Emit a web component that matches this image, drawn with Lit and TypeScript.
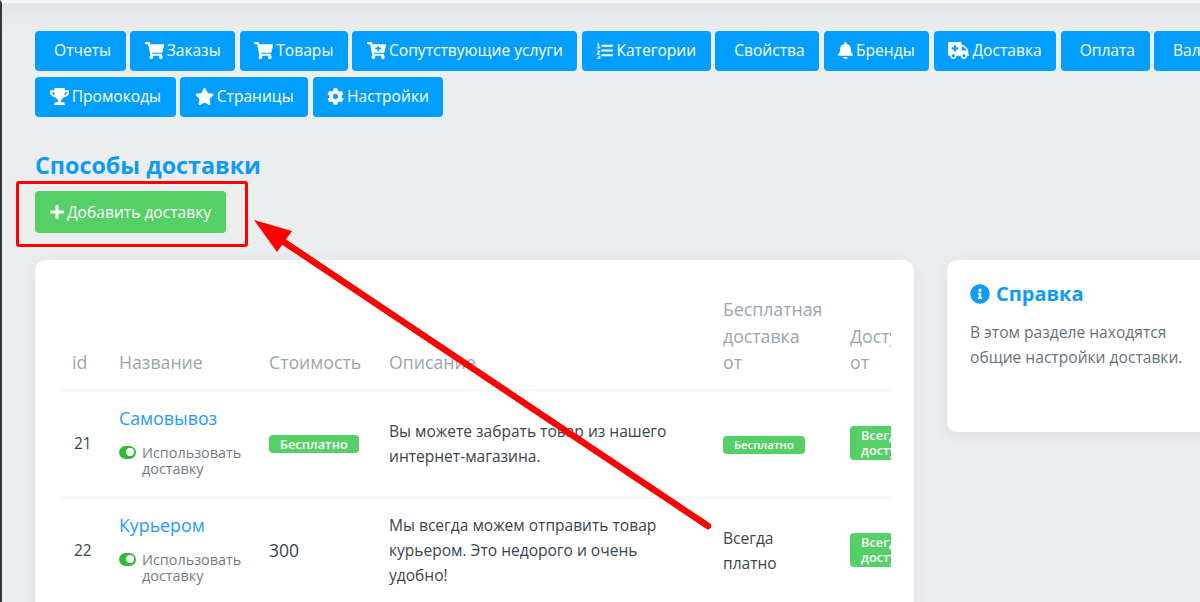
import { LitElement, html, css, svg } from "lit";
import { customElement } from "lit/decorators.js";

const P = {
  cart: [576, "M528.12 301.319l47.273-208C578.806 78.301 567.391 64 551.99 64H159.208l-9.166-44.81C147.758 8.021 137.93 0 126.529 0H24C10.745 0 0 10.745 0 24v16c0 13.255 10.745 24 24 24h69.883l70.248 343.435C147.325 417.1 136 435.222 136 456c0 30.928 25.072 56 56 56s56-25.072 56-56c0-15.674-6.447-29.835-16.824-40h209.647C430.447 426.165 424 440.326 424 456c0 30.928 25.072 56 56 56s56-25.072 56-56c0-22.172-12.888-41.332-31.579-50.405l5.517-24.276c3.413-15.018-8.002-29.319-23.403-29.319H218.117l-6.545-32h293.145c11.206 0 20.92-7.754 23.403-18.681z"],
  cartPlus: [576, "M504.717 320H211.572l6.545 32h268.418c15.401 0 26.816 14.301 23.403 29.319l-5.517 24.276C523.112 414.668 536 433.828 536 456c0 31.202-25.519 56.444-56.824 55.994-29.823-.429-54.35-24.631-55.155-54.447-.44-16.287 6.085-31.049 16.803-41.548H231.176C241.553 426.165 248 440.326 248 456c0 31.813-26.528 57.431-58.67 55.938-28.54-1.325-51.751-24.385-53.251-52.917-1.158-22.034 10.436-41.455 28.051-51.586L93.883 64H24C10.745 64 0 53.255 0 40V24C0 10.745 10.745 0 24 0h102.529c11.401 0 21.228 8.021 23.513 19.19L159.208 64H551.99c15.401 0 26.816 14.301 23.403 29.319l-47.273 208C525.637 312.246 515.923 320 504.717 320zM408 168h-48v-40c0-8.837-7.163-16-16-16h-16c-8.837 0-16 7.163-16 16v40h-48c-8.837 0-16 7.163-16 16v16c0 8.837 7.163 16 16 16h48v40c0 8.837 7.163 16 16 16h16c8.837 0 16-7.163 16-16v-40h48c8.837 0 16-7.163 16-16v-16c0-8.837-7.163-16-16-16z"],
  list: [512, "M176 80h320c9 0 16 7 16 16v32c0 9-7 16-16 16H176c-9 0-16-7-16-16V96c0-9 7-16 16-16zm0 144h320c9 0 16 7 16 16v32c0 9-7 16-16 16H176c-9 0-16-7-16-16v-32c0-9 7-16 16-16zm0 144h320c9 0 16 7 16 16v32c0 9-7 16-16 16H176c-9 0-16-7-16-16v-32c0-9 7-16 16-16zM40 48h56v112h32v32H24v-32h32V80H40zM24 256h104v32l-64 64h64v32H24v-32l64-64H24zM24 416h104v96H24v-32h72v-16H56v-32h40v-16H24z"],
  bell: [448, "M224 512c35.32 0 63.97-28.65 63.97-64H160.03c0 35.35 28.65 64 63.97 64zm215.39-149.71c-19.32-20.76-55.47-51.99-55.47-154.29 0-77.7-54.48-139.9-127.94-155.16V32c0-17.67-14.32-32-31.98-32s-31.98 14.33-31.98 32v20.84C118.56 68.1 64.08 130.3 64.08 208c0 102.3-36.15 133.53-55.47 154.29-6 6.45-8.66 14.16-8.61 21.71.11 16.4 12.98 32 32.1 32h383.8c19.12 0 32-15.6 32.1-32 .05-7.55-2.61-15.27-8.61-21.71z"],
  truck: [640, "M624 352h-16V243.9c0-12.7-5.1-24.9-14.1-33.9L494 110.1c-9-9-21.2-14.1-33.9-14.1H416V48c0-26.5-21.5-48-48-48H48C21.5 0 0 21.5 0 48v320c0 26.5 21.5 48 48 48h16c0 53 43 96 96 96s96-43 96-96h128c0 53 43 96 96 96s96-43 96-96h48c8.8 0 16-7.2 16-16v-32c0-8.8-7.2-16-16-16zM160 464c-26.5 0-48-21.5-48-48s21.5-48 48-48 48 21.5 48 48-21.5 48-48 48zm144-248c0 4.4-3.6 8-8 8h-56v56c0 4.4-3.6 8-8 8h-48c-4.4 0-8-3.6-8-8v-56h-56c-4.4 0-8-3.6-8-8v-48c0-4.4 3.6-8 8-8h56v-56c0-4.4 3.6-8 8-8h48c4.4 0 8 3.6 8 8v56h56c4.4 0 8 3.6 8 8v48zm176 248c-26.5 0-48-21.5-48-48s21.5-48 48-48 48 21.5 48 48-21.5 48-48 48zm80-208H416V144h44.1l99.9 99.9V256z"],
  trophy: [576, "M552 64H448V24c0-13.3-10.7-24-24-24H152c-13.3 0-24 10.7-24 24v40H24C10.7 64 0 74.7 0 88v56c0 35.7 22.5 72.4 61.9 100.7 31.5 22.7 69.8 37.1 110 41.7C203.3 338.5 240 360 240 360v72h-48c-35.3 0-64 20.7-64 56v12c0 6.6 5.4 12 12 12h296c6.6 0 12-5.4 12-12v-12c0-35.3-28.7-56-64-56h-48v-72s36.7-21.5 68.1-73.6c40.3-4.6 78.7-19 110-41.7 39.3-28.3 61.9-65 61.9-100.7V88c0-13.3-10.7-24-24-24zM99.3 192.8C74.9 175.2 64 155.6 64 144v-16h64.2c1 32.6 5.8 61.2 12.8 86.2-15.1-5.2-29.2-12.4-41.7-21.4zM512 144c0 16.1-17.7 36.1-35.3 48.8-12.5 9-26.7 16.2-41.8 21.4 7-25 11.8-53.6 12.8-86.2H512v16z"],
  star: [576, "M259.3 17.8L194 150.2 47.9 171.5c-26.2 3.8-36.7 36.1-17.7 54.6l105.7 103-25 145.5c-4.5 26.3 23.2 46 46.4 33.7L288 439.6l130.7 68.7c23.2 12.2 50.9-7.4 46.4-33.7l-25-145.5 105.7-103c19-18.5 8.5-50.8-17.7-54.6L382 150.2 316.7 17.8c-11.7-23.6-45.6-23.9-57.4 0z"],
  cog: [512, "M487.4 315.7l-42.6-24.6c4.3-23.2 4.3-47 0-70.2l42.6-24.6c4.9-2.8 7.1-8.6 5.5-14-11.1-35.6-30-67.8-54.7-94.6-3.8-4.1-10-5.1-14.8-2.3L380.8 110c-17.9-15.4-38.5-27.3-60.8-35.1V25.8c0-5.6-3.9-10.5-9.4-11.7-36.7-8.2-74.3-7.8-109.2 0-5.5 1.2-9.4 6.1-9.4 11.7V75c-22.2 7.9-42.8 19.8-60.8 35.1L88.7 85.5c-4.9-2.8-11-1.9-14.8 2.3-24.7 26.7-43.6 58.9-54.7 94.6-1.7 5.4.6 11.2 5.5 14L67.3 221c-4.3 23.2-4.3 47 0 70.2l-42.6 24.6c-4.9 2.8-7.1 8.6-5.5 14 11.1 35.6 30 67.8 54.7 94.6 3.8 4.1 10 5.1 14.8 2.3l42.6-24.6c17.9 15.4 38.5 27.3 60.8 35.1v49.2c0 5.6 3.9 10.5 9.4 11.7 36.7 8.2 74.3 7.8 109.2 0 5.5-1.2 9.4-6.1 9.4-11.7v-49.2c22.2-7.9 42.8-19.8 60.8-35.1l42.6 24.6c4.9 2.8 11 1.9 14.8-2.3 24.7-26.7 43.6-58.9 54.7-94.6 1.5-5.5-.7-11.3-5.6-14.1zM256 336c-44.1 0-80-35.9-80-80s35.9-80 80-80 80 35.9 80 80-35.9 80-80 80z"],
  plus: [448, "M416 208H272V64c0-17.67-14.33-32-32-32h-32c-17.67 0-32 14.33-32 32v144H32c-17.67 0-32 14.33-32 32v32c0 17.67 14.33 32 32 32h144v144c0 17.67 14.33 32 32 32h32c17.67 0 32-14.33 32-32V304h144c17.67 0 32-14.33 32-32v-32c0-17.67-14.33-32-32-32z"],
  info: [512, "M256 8C119.043 8 8 119.083 8 256c0 136.997 111.043 248 248 248s248-111.003 248-248C504 119.083 392.957 8 256 8zm0 110c23.196 0 42 18.804 42 42s-18.804 42-42 42-42-18.804-42-42 18.804-42 42-42zm56 254c0 6.627-5.373 12-12 12h-88c-6.627 0-12-5.373-12-12v-24c0-6.627 5.373-12 12-12h12v-64h-12c-6.627 0-12-5.373-12-12v-24c0-6.627 5.373-12 12-12h64c6.627 0 12 5.373 12 12v100h12c6.627 0 12 5.373 12 12v24z"],
} as const;

type IconName = keyof typeof P;

const icon = (n: IconName, h = 17) => {
  const [w, d] = P[n];
  return html`<svg class="ic" width=${(w / 512) * h} height=${h} viewBox="0 0 ${w} 512" fill="currentColor">${svg`<path d=${d}></path>`}</svg>`;
};

const NAV: { t: string; i?: IconName }[] = [
  { t: "Отчеты" },
  { t: "Заказы", i: "cart" },
  { t: "Товары", i: "cart" },
  { t: "Сопутствующие услуги", i: "cartPlus" },
  { t: "Категории", i: "list" },
  { t: "Свойства" },
  { t: "Бренды", i: "bell" },
  { t: "Доставка", i: "truck" },
  { t: "Оплата" },
  { t: "Валюты" },
  { t: "Промокоды", i: "trophy" },
  { t: "Страницы", i: "star" },
  { t: "Настройки", i: "cog" },
];

@customElement("app-root")
export class AppRoot extends LitElement {
  static styles = css`
    :host {
      display: block;
      position: relative;
      width: 1200px;
      height: 602px;
      overflow: hidden;
      box-sizing: border-box;
      background: linear-gradient(#e3e4e6 0, #ecedef 30px);
      border-top: 3px solid #f4f5f6;
      border-left: 2px solid #33363a;
      font-family: "Open Sans", "Noto Sans", sans-serif;
      color: #39454f;
    }
    main {
      padding: 28px 0 0 33px;
      width: 1300px;
    }
    nav {
      display: flex;
      flex-wrap: wrap;
      gap: 6px 4.5px;
      width: 1222px;
    }
    .btn {
      display: inline-flex;
      align-items: center;
      gap: 3px;
      box-sizing: border-box;
      height: 40px;
      padding: 0 14.5px 2px;
      border-radius: 4px;
      background: #009fff;
      color: #fff;
      font-size: 15.6px;
      white-space: nowrap;
    }
    .btn.plain {
      padding-left: 19px;
    }
    h1 {
      margin: 35px 0 0;
      font-size: 23.3px;
      line-height: 26px;
      font-weight: 700;
      color: #0e9bf5;
    }
    .add-wrap {
      display: inline-block;
      position: relative;
      margin-top: 13px;
    }
    .add {
      height: 42px;
      background: #55d066;
      padding: 0;
      width: 191px;
      justify-content: center;
    }
    .cols {
      display: flex;
      gap: 33px;
      margin-top: 27px;
    }
    .card {
      background: #fff;
      border-radius: 10px;
      box-shadow: 0 4px 16px rgba(40, 50, 60, 0.08);
    }
    .table-card {
      width: 879px;
      height: 500px;
      padding: 36px 23px 0 25px;
      box-sizing: border-box;
      flex: none;
    }
    .clip {
      overflow: hidden;
    }
    table {
      border-collapse: collapse;
      table-layout: fixed;
      width: 900px;
      font-size: 15.55px;
    }
    th,
    td {
      padding: 0 12px;
      text-align: left;
      vertical-align: middle;
    }
    th {
      vertical-align: bottom;
      font-weight: 400;
      font-size: 17.7px;
      line-height: 26.5px;
      color: #98a6ad;
      padding-bottom: 14px;
      border-bottom: 1px solid #eef0f2;
    }
    td {
      line-height: 25px;
      border-bottom: 1px solid #eef0f2;
      height: 106px;
    }
    td.desc {
      padding-right: 40px;
    }
    td.num {
      padding-left: 14px;
      font-size: 15.5px;
    }
    td.big {
      font-size: 17.5px;
    }
    a {
      color: #1f9bff;
      font-size: 17.8px;
      line-height: 24px;
      display: block;
    }
    .use {
      display: flex;
      gap: 6px;
      margin: 14.5px 0 4.5px;
      font-size: 14.4px;
      line-height: 16px;
      color: #6f7c86;
    }
    .toggle {
      flex: none;
      width: 17px;
      height: 13px;
      margin-top: 1px;
      border-radius: 7px;
      background: #2dba3a;
      position: relative;
    }
    .toggle::after {
      content: "";
      position: absolute;
      right: 2.5px;
      top: 2.5px;
      width: 8px;
      height: 8px;
      border-radius: 50%;
      background: #fff;
    }
    .tag {
      display: inline-block;
      background: #55d066;
      color: #fff;
      border-radius: 4px;
      font-size: 12.8px;
      font-weight: 600;
      line-height: 18px;
      padding: 0 11px;
    }
    .tag.sm {
      font-size: 11.3px;
    }
    .tag.multi {
      font-size: 12.8px;
      line-height: 15px;
      padding: 2px 11px;
      font-weight: 600;
    }
    .help {
      width: 320px;
      height: 172px;
      padding: 21px 23px;
      box-sizing: border-box;
      flex: none;
    }
    h2 {
      margin: 0;
      display: flex;
      align-items: center;
      gap: 6px;
      font-size: 20px;
      line-height: 26px;
      font-weight: 700;
      color: #0e9bf5;
    }
    p {
      margin: 13px 0 0;
      font-size: 15.6px;
      line-height: 25px;
      color: #66727d;
    }
    .overlay {
      position: absolute;
      left: -2px;
      top: -3px;
      pointer-events: none;
    }
  `;

  render() {
    return html`
      <main>
        <nav>
          ${NAV.map(
            (n) => html`<div class="btn ${n.i ? "" : "plain"}">${n.i ? icon(n.i) : ""}${n.t}</div>`
          )}
        </nav>
        <h1>Способы доставки</h1>
        <div class="add-wrap"><div class="btn add">${icon("plus", 16)}Добавить доставку</div></div>
        <div class="cols">
          <section class="card table-card">
            <div class="clip">
              <table>
                <colgroup>
                  <col style="width:47px" />
                  <col style="width:150px" />
                  <col style="width:120px" />
                  <col style="width:334px" />
                  <col style="width:127px" />
                  <col />
                </colgroup>
                <thead>
                  <tr>
                    <th>id</th>
                    <th>Название</th>
                    <th>Стоимость</th>
                    <th>Описание</th>
                    <th>Бесплатная<br />доставка<br />от</th>
                    <th>Доступно<br />от</th>
                  </tr>
                </thead>
                <tbody>
                  <tr>
                    <td class="num">21</td>
                    <td>
                      <a>Самовывоз</a>
                      <div class="use"><span class="toggle"></span><span>Использовать доставку</span></div>
                    </td>
                    <td><span class="tag">Бесплатно</span></td>
                    <td class="desc">Вы можете забрать товар из нашего интернет-магазина.</td>
                    <td><span class="tag sm">Бесплатно</span></td>
                    <td><span class="tag multi">Всегда<br />доступно</span></td>
                  </tr>
                  <tr>
                    <td class="num">22</td>
                    <td>
                      <a>Курьером</a>
                      <div class="use"><span class="toggle"></span><span>Использовать доставку</span></div>
                    </td>
                    <td class="big">300</td>
                    <td class="desc">Мы всегда можем отправить товар курьером. Это недорого и очень удобно!</td>
                    <td>Всегда платно</td>
                    <td><span class="tag multi">Всегда<br />доступно</span></td>
                  </tr>
                </tbody>
              </table>
            </div>
          </section>
          <aside class="card help">
            <h2>${icon("info", 20)}Справка</h2>
            <p>В этом разделе находятся<br />общие настройки доставки.</p>
          </aside>
        </div>
      </main>
      <svg class="overlay" width="1200" height="602" viewBox="0 0 1200 602">
        <rect x="17.5" y="182.5" width="229" height="63" fill="none" stroke="#fe0000" stroke-width="3" rx="1.5"></rect>
        <line x1="708" y1="526" x2="278" y2="238" stroke="#fe0000" stroke-width="6.5" stroke-linecap="round"></line>
        <polygon points="254,220 292,231 277,252" fill="#fe0000"></polygon>
      </svg>
    `;
  }
}
